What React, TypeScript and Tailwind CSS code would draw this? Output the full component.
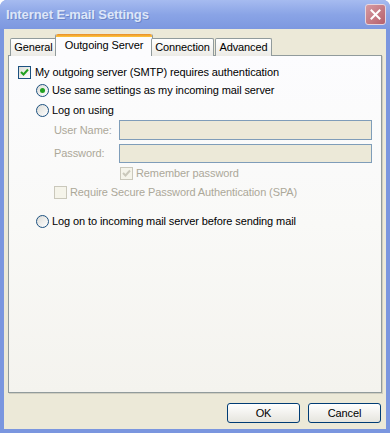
const font = { fontFamily: '"Liberation Sans", Arial, sans-serif' }

function Check({ checked, disabled }: { checked?: boolean; disabled?: boolean }) {
  return (
    <div
      className={
        'flex h-[13px] w-[13px] shrink-0 items-center justify-center border ' +
        (disabled ? 'border-[#cac8bb] bg-[#f5f4ea]' : 'border-[#1c5180] bg-gradient-to-br from-[#dcdcd7] to-white')
      }
    >
      {checked && (
        <svg width="9" height="9" viewBox="0 0 9 9">
          <path
            d="M1 4 L3.5 6.5 L8 1.5"
            fill="none"
            stroke={disabled ? '#cac8bb' : '#21a121'}
            strokeWidth="2"
          />
        </svg>
      )}
    </div>
  )
}

function Radio({ checked }: { checked?: boolean }) {
  return (
    <div className="flex h-[13px] w-[13px] shrink-0 items-center justify-center rounded-full border border-[#1c5180] bg-gradient-to-br from-[#dcdcd7] to-white">
      {checked && <div className="h-[5px] w-[5px] rounded-full bg-[#21a121]" />}
    </div>
  )
}

export default function App() {
  return (
    <div
      className="flex h-[433px] w-[390px] flex-col overflow-hidden rounded-t-[7px] bg-[#7a96df] text-[11px] tracking-[-0.1px] text-black"
      style={font}
    >
      {/* title bar */}
      <div className="flex h-[29px] shrink-0 items-center justify-between bg-gradient-to-b from-[#a6bbf0] via-[#8aa4e6] to-[#7d98e0] pl-[6px] pr-[4px]">
        <span className="text-[13px] font-bold tracking-[-0.1px] text-[#dde6f8] [text-shadow:1px_1px_0_#6d86c9]">
          Internet E-mail Settings
        </span>
        <div className="flex h-[21px] w-[21px] items-center justify-center rounded-[3px] border border-[#e6d5de] bg-gradient-to-br from-[#d69aa2] to-[#b5606c]">
          <svg width="11" height="11" viewBox="0 0 11 11">
            <path d="M1.5 1.5 L9.5 9.5 M9.5 1.5 L1.5 9.5" stroke="white" strokeWidth="2" strokeLinecap="square" />
          </svg>
        </div>
      </div>

      {/* body */}
      <div className="mx-[4px] mb-[4px] flex flex-1 flex-col bg-[#ece9d8] px-[4px] pt-[5px]">
        {/* tabs */}
        <div className="relative z-10 flex h-[22px] items-end pl-[2px]">
          <div className="flex h-[18px] w-[47px] items-center justify-center rounded-t-[2px] border border-b-0 border-[#919b9c] bg-gradient-to-b from-white to-[#ecebe6]">
            General
          </div>
          <div className="-mx-[2px] flex h-[22px] w-[98px] flex-col rounded-t-[2px] border-x border-[#919b9c] bg-[#fcfcfe]">
            <div className="h-[3px] rounded-t-[2px] bg-gradient-to-b from-[#e68b2c] to-[#ffc83c]" />
            <div className="flex flex-1 items-center justify-center pb-[2px]">Outgoing Server</div>
          </div>
          <div className="flex h-[18px] w-[63px] items-center justify-center rounded-t-[2px] border border-b-0 border-[#919b9c] bg-gradient-to-b from-white to-[#ecebe6]">
            Connection
          </div>
          <div className="ml-px flex h-[18px] w-[57px] items-center justify-center rounded-t-[2px] border border-b-0 border-[#919b9c] bg-gradient-to-b from-white to-[#ecebe6]">
            Advanced
          </div>
        </div>

        {/* panel */}
        <div className="-mt-px flex h-[338px] flex-col border border-[#919b9c] bg-gradient-to-b from-[#fcfcfe] via-[#f9f9f7] to-[#f4f3ee] pl-[9px] pt-[10px] shadow-[1px_1px_0_#d0cec0]">
          <div className="flex h-[13px] items-center gap-[4px]">
            <Check checked />
            <span>My outgoing server (SMTP) requires authentication</span>
          </div>
          <div className="mt-[5px] flex h-[13px] items-center gap-[3px] pl-[18px]">
            <Radio checked />
            <span>Use same settings as my incoming mail server</span>
          </div>
          <div className="mt-[7px] flex h-[13px] items-center gap-[3px] pl-[18px]">
            <Radio />
            <span>Log on using</span>
          </div>

          <div className="mt-[3px] flex h-[20px] items-center pl-[36px] text-[#aca899]">
            <span className="w-[65px]">User Name:</span>
            <div className="h-[20px] w-[253px] border border-[#7f9db9] bg-[#ece9d8]" />
          </div>
          <div className="mt-[4px] flex h-[19px] items-center pl-[36px] text-[#aca899]">
            <span className="w-[65px]">Password:</span>
            <div className="h-[19px] w-[253px] border border-[#7f9db9] bg-[#ece9d8]" />
          </div>
          <div className="mt-[4px] flex h-[13px] items-center gap-[3px] pl-[102px] text-[#aca899]">
            <Check checked disabled />
            <span>Remember password</span>
          </div>
          <div className="mt-[6px] flex h-[13px] items-center gap-[3px] pl-[36px] text-[#aca899]">
            <Check disabled />
            <span>Require Secure Password Authentication (SPA)</span>
          </div>

          <div className="mt-[16px] flex h-[13px] items-center gap-[3px] pl-[18px]">
            <Radio />
            <span>Log on to incoming mail server before sending mail</span>
          </div>
        </div>

        {/* buttons */}
        <div className="mt-[10px] flex justify-end gap-[8px] pr-[1px]">
          <button className="h-[20px] w-[73px] rounded-[3px] border border-[#003c74] bg-gradient-to-b from-white to-[#e6e5de] text-[11px]">
            OK
          </button>
          <button className="h-[20px] w-[73px] rounded-[3px] border border-[#003c74] bg-gradient-to-b from-white to-[#e6e5de] text-[11px]">
            Cancel
          </button>
        </div>
      </div>
    </div>
  )
}
